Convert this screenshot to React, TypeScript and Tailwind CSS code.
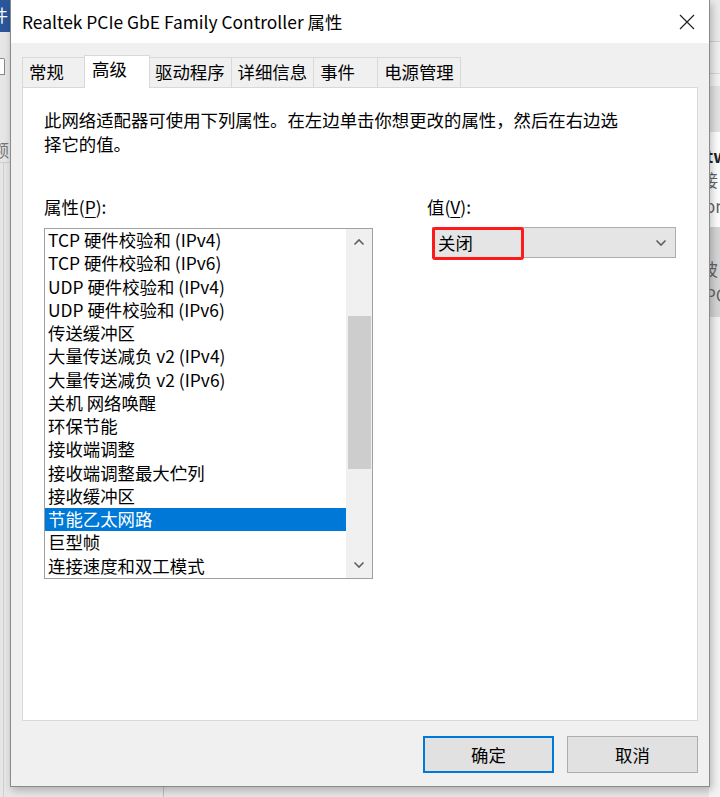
import React from "react";

const FONT = '"Noto Sans CJK SC", "Noto Sans", sans-serif';

const items = [
  "TCP 硬件校验和 (IPv4)",
  "TCP 硬件校验和 (IPv6)",
  "UDP 硬件校验和 (IPv4)",
  "UDP 硬件校验和 (IPv6)",
  "传送缓冲区",
  "大量传送减负 v2 (IPv4)",
  "大量传送减负 v2 (IPv6)",
  "关机 网络唤醒",
  "环保节能",
  "接收端调整",
  "接收端调整最大伫列",
  "接收缓冲区",
  "节能乙太网路",
  "巨型帧",
  "连接速度和双工模式",
];

const tabs = ["常规", "高级", "驱动程序", "详细信息", "事件", "电源管理"];

function Chevron({ up }: { up?: boolean }) {
  return (
    <svg width="12" height="8" viewBox="0 0 12 8" className="block">
      <path
        d={up ? "M1.5 6.5 L6 2 L10.5 6.5" : "M1.5 1.5 L6 6 L10.5 1.5"}
        fill="none"
        stroke="#606060"
        strokeWidth="1.6"
      />
    </svg>
  );
}

export default function App() {
  return (
    <div
      className="relative h-[797px] w-[720px] overflow-hidden bg-[#e6e6e6] text-black"
      style={{ fontFamily: FONT }}
    >
      {/* desktop behind the dialog */}
      <div className="absolute left-0 top-0 h-[32px] w-[10px] overflow-hidden bg-[#2b579a]">
        <span className="absolute -left-[9px] top-[3px] text-[17px] leading-[24px] text-white">件</span>
      </div>
      <div className="absolute left-0 top-[58px] h-[17px] w-[5px] rounded-tr-[2px] border border-l-0 border-[#888] bg-white" />
      <div className="absolute left-0 top-[138px] w-[10px] overflow-hidden">
        <span className="relative -left-[8px] text-[17px] leading-[24px] text-[#777]">额</span>
      </div>
      <div className="absolute left-0 top-[162px] h-px w-[10px] bg-[#d0d0d0]" />
      <div className="absolute left-[3px] top-[162px] h-[640px] w-px bg-[#cfcfcf]" />
      <div className="absolute left-[163px] top-[786px] h-[12px] w-px bg-[#bdbdbd]" />

      <div className="absolute left-[709px] top-0 h-[797px] w-[11px] overflow-hidden bg-[#f3f3f3]">
        <div className="h-[41px] bg-[#ebebeb]" />
        <div className="h-px bg-[#d0d0d0]" />
        <div className="h-[31px] bg-[#f0f0f0]" />
        <div className="h-px bg-[#d8d8d8]" />
        <div className="h-[12px] bg-[#f3f3f3]" />
        <div className="h-[46px] bg-[#e3e3e3]" />
        <div className="relative h-[95px] bg-white">
          <span className="absolute -left-[3px] top-[12px] text-[17px] font-bold leading-[24px] text-[#222]">tw</span>
          <span className="absolute -left-[8px] top-[36px] text-[17px] leading-[24px] text-[#666]">接</span>
          <span className="absolute -left-[4px] top-[62px] text-[17px] leading-[24px] text-[#666]">on</span>
        </div>
        <div className="relative h-[90px] bg-[#d6d6d6]">
          <span className="absolute -left-[8px] top-[30px] text-[17px] leading-[24px] text-[#666]">披</span>
          <span className="absolute -left-[4px] top-[56px] text-[17px] leading-[24px] text-[#666]">PC</span>
        </div>
        <div className="h-[480px] bg-[#f3f3f3]" />
      </div>

      {/* dialog */}
      <div className="absolute left-[10px] top-0 flex h-[787px] w-[700px] flex-col border border-t-0 border-[#8a8a8a] bg-[#f0f0f0] shadow-[2px_3px_8px_rgba(0,0,0,0.25)]">
        <div className="flex h-[43px] shrink-0 items-center justify-between bg-white pl-[11px] pr-[14px]">
          <span className="text-[17.4px] leading-[24px]">Realtek PCIe GbE Family Controller 属性</span>
          <svg width="16" height="16" viewBox="0 0 16 16">
            <path d="M1 1 L15 15 M15 1 L1 15" stroke="#222" strokeWidth="1.2" />
          </svg>
        </div>

        <div className="flex flex-1 flex-col px-[11px] pt-[12px]">
          <div className="flex h-[32px] items-end">
            {tabs.map((t, i) =>
              i === 1 ? (
                <div
                  key={t}
                  className="relative z-10 -mx-[2px] -mb-px flex h-[33px] min-w-[66px] items-start border border-b-0 border-[#d9d9d9] bg-white px-[7px] pt-[1px] text-[17.4px] leading-[24px]"
                >
                  {t}
                </div>
              ) : (
                <div
                  key={t}
                  className="flex h-[30px] min-w-[64px] items-center border border-b-0 border-[#d9d9d9] bg-[#f0f0f0] px-[6px] pb-[1px] text-[17.4px] leading-[24px] [&+&]:border-l-0"
                >
                  {t}
                </div>
              ),
            )}
          </div>

          <div className="h-[634px] w-[676px] border border-[#d9d9d9] bg-white pl-[21px] pt-[20px]">
            <p className="w-[580px] text-[17.4px] leading-[24px]">
              此网络适配器可使用下列属性。在左边单击你想更改的属性，然后在右边选择它的值。
            </p>

            <div className="mt-[39px] flex gap-[54px]">
              <div className="w-[329px]">
                <div className="h-[33px] text-[17.4px] leading-[24px]">
                  属性(<span className="underline underline-offset-[3px]">P</span>):
                </div>
                <div className="flex h-[351px] border border-[#a0a0a0] bg-white">
                  <div className="w-[301px]">
                    {items.map((it, i) => (
                      <div
                        key={it}
                        className={
                          i === 12
                            ? "h-[23.25px] whitespace-nowrap bg-[#0078d7] pl-[3px] text-[17.4px] leading-[22px] text-white"
                            : "h-[23.25px] whitespace-nowrap pl-[3px] text-[17.4px] leading-[22px]"
                        }
                      >
                        {it}
                      </div>
                    ))}
                  </div>
                  <div className="flex w-[26px] flex-col items-center bg-[#f0f0f0]">
                    <div className="flex h-[26px] items-center justify-center">
                      <Chevron up />
                    </div>
                    <div className="mt-[61px] h-[153px] w-[23px] bg-[#cdcdcd]" />
                    <div className="flex-1" />
                    <div className="flex h-[26px] items-center justify-center">
                      <Chevron />
                    </div>
                  </div>
                </div>
              </div>

              <div className="w-[250px]">
                <div className="h-[32px] text-[17.4px] leading-[24px]">
                  值(<span className="underline underline-offset-[3px]">V</span>):
                </div>
                <div className="relative ml-[5px] flex h-[31px] w-[244px] items-center justify-between border border-[#adadad] bg-[#e5e5e5] pl-[5px] pr-[8px]">
                  <span className="text-[17.4px] leading-[24px]">关闭</span>
                  <Chevron />
                  <div className="absolute -left-[1px] -top-[1px] h-[33px] w-[92px] rounded-[3px] border-[3px] border-[#ff1a1a]" />
                </div>
              </div>
            </div>
          </div>

          <div className="mt-[15px] flex justify-end gap-[13px]">
            <button className="flex h-[37px] w-[131px] items-center justify-center border-2 border-[#0078d7] bg-[#e1e1e1] text-[17.4px] leading-[24px]">
              确定
            </button>
            <button className="flex h-[37px] w-[131px] items-center justify-center border border-[#adadad] bg-[#e1e1e1] text-[17.4px] leading-[24px]">
              取消
            </button>
          </div>
        </div>
      </div>
    </div>
  );
}
